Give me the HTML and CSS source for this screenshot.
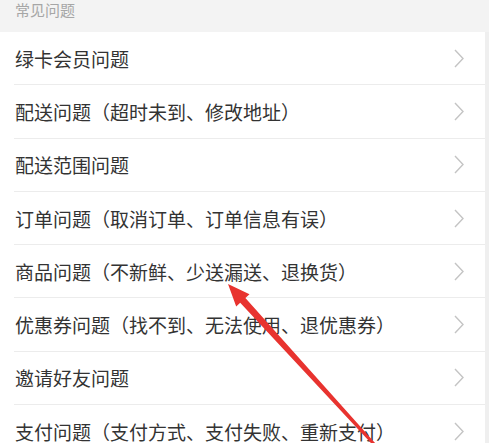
FILE: index.html
```html
<!DOCTYPE html>
<html lang="zh-CN">
<head>
  <meta charset="UTF-8">
  <meta name="viewport" content="width=device-width, initial-scale=1.0">
  <title>常见问题</title>
  <link rel="stylesheet" href="styles.css">
</head>
<body>

  <div class="faq-page">
    <h2 class="faq-title">常见问题</h2>

    <ul class="faq-list">
      <li class="faq-item"><span>绿卡会员问题</span><svg class="chevron" viewBox="0 0 10 19"><polyline points="1,1 9,9.5 1,18"/></svg></li>
      <li class="faq-item"><span>配送问题（超时未到、修改地址）</span><svg class="chevron" viewBox="0 0 10 19"><polyline points="1,1 9,9.5 1,18"/></svg></li>
      <li class="faq-item"><span>配送范围问题</span><svg class="chevron" viewBox="0 0 10 19"><polyline points="1,1 9,9.5 1,18"/></svg></li>
      <li class="faq-item"><span>订单问题（取消订单、订单信息有误）</span><svg class="chevron" viewBox="0 0 10 19"><polyline points="1,1 9,9.5 1,18"/></svg></li>
      <li class="faq-item"><span>商品问题（不新鲜、少送漏送、退换货）</span><svg class="chevron" viewBox="0 0 10 19"><polyline points="1,1 9,9.5 1,18"/></svg></li>
      <li class="faq-item"><span>优惠券问题（找不到、无法使用、退优惠券）</span><svg class="chevron" viewBox="0 0 10 19"><polyline points="1,1 9,9.5 1,18"/></svg></li>
      <li class="faq-item"><span>邀请好友问题</span><svg class="chevron" viewBox="0 0 10 19"><polyline points="1,1 9,9.5 1,18"/></svg></li>
      <li class="faq-item"><span>支付问题（支付方式、支付失败、重新支付）</span><svg class="chevron" viewBox="0 0 10 19"><polyline points="1,1 9,9.5 1,18"/></svg></li>
    </ul>

    <!-- Annotation arrow -->
    <svg class="annotation" viewBox="0 0 489 443">
      <polygon points="228,284 249.5,294.2 245.4,297.9 376.2,444.3 373.8,446.1 240.2,302.7 236.2,306.4"/>
    </svg>
  </div>

</body>
</html>
```

FILE: styles.css
```css
/* Basic Reset */
* {
  margin: 0;
  padding: 0;
  box-sizing: border-box;
}

body {
  font-family: "Noto Sans CJK SC", "Noto Sans", sans-serif;
  background: #efefef;
  overflow: hidden;
}

.faq-page {
  position: relative;
  height: 443px;
}

/* Section Title */
.faq-title {
  height: 32px;
  padding: 0 15px;
  background: #f3f3f3;
  color: #a6a6a6;
  font-size: 15px;
  font-weight: normal;
  line-height: 20px;
}

/* List */
.faq-list {
  list-style: none;
  background: #fff;
  margin-right: 4px;
}

.faq-item {
  display: flex;
  align-items: center;
  justify-content: space-between;
  height: 53.3px;
  margin-left: 14px;
  padding-right: 21px;
  border-bottom: 1px solid #ececec;
  color: #333;
  font-size: 19px;
}

.faq-item span {
  margin-left: 1px;
}

.chevron {
  width: 10px;
  height: 19px;
  fill: none;
  stroke: #c4c4c4;
  stroke-width: 1.4;
}

/* Red Arrow Overlay */
.annotation {
  position: absolute;
  top: 0;
  left: 0;
  width: 489px;
  height: 443px;
  fill: #e8332f;
}
```
